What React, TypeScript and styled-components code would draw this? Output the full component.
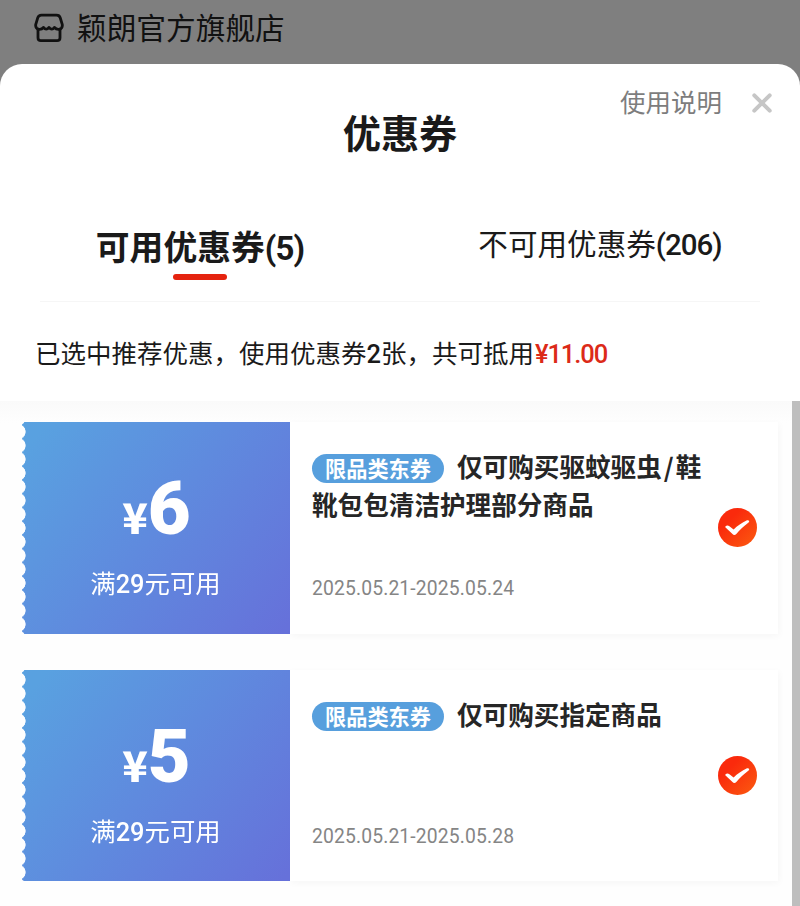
import styled, { createGlobalStyle } from "styled-components";

const GlobalStyle = createGlobalStyle`
  * {
    box-sizing: border-box;
  }
  body {
    margin: 0;
    background-color: #7f7f7f;
    color: #1a1a1a;
    font-family: "Noto Sans CJK SC", sans-serif;
  }
`;
const Page = styled.div`
  display: flex;
  flex-direction: column;
  width: 800px;
  height: 906px;
  overflow: hidden;
  background-color: #7f7f7f;
`;
const ShopBar = styled.header`
  display: flex;
  align-items: center;
  gap: 13px;
  height: 64px;
  padding: 0 0 8px 34px;
  svg {
    width: 30px;
    height: 30px;
  }
`;
const ShopName = styled.span`
  padding-bottom: 3px;
  font-size: 29.7px;
  line-height: 40px;
  color: #111;
`;
const Sheet = styled.section`
  flex: 1;
  display: flex;
  flex-direction: column;
  min-height: 0;
  overflow: hidden;
  background-color: #fff;
  border-radius: 22px 22px 0 0;
`;
const SheetActions = styled.div`
  display: flex;
  justify-content: flex-end;
  align-items: center;
  gap: 29px;
  height: 49px;
  padding: 26px 27px 0 0;
`;
const HelpLink = styled.a`
  padding-bottom: 2px;
  font-size: 25.5px;
  line-height: 25px;
  color: #7d7d7d;
`;
const CloseButton = styled.button`
  display: flex;
  padding: 2px 0 0;
  border: 0;
  background: none;
  svg {
    width: 22px;
    height: 22px;
  }
`;
const Title = styled.h1`
  margin: 0;
  font-size: 38.2px;
  font-weight: 700;
  line-height: 38px;
  text-align: center;
`;
const Tabs = styled.nav`
  display: grid;
  grid-template-columns: 1fr 1fr;
  height: 151px;
  margin: 0 40px;
  padding-top: 72px;
  border-bottom: 1px solid #f6f6f6;
`;
const Tab = styled.div<{ $active?: boolean }>`
  display: flex;
  flex-direction: column;
  align-items: center;
  white-space: nowrap;
  font-size: ${(p) => (p.$active ? "33.8px" : "29.6px")};
  font-weight: ${(p) => (p.$active ? 700 : 400)};
  line-height: ${(p) => (p.$active ? "46px" : "40px")};
  padding-left: ${(p) => (p.$active ? 0 : "40px")};
  padding-right: ${(p) => (p.$active ? "40px" : 0)};
`;
const TabCount = styled.span<{ $active?: boolean }>`
  font-family: Roboto, sans-serif;
  font-size: ${(p) => (p.$active ? "33px" : "29.5px")};
  font-weight: ${(p) => (p.$active ? 700 : 500)};
  line-height: 1;
  letter-spacing: ${(p) => (p.$active ? "-0.9px" : "-1px")};
`;
const TabLine = styled.i`
  width: 54px;
  height: 6px;
  margin-top: 5px;
  border-radius: 3px;
  background-color: #e5230f;
`;
const Summary = styled.p`
  margin: 0;
  height: 99px;
  padding: 31px 0 0 35px;
  font-size: 25.5px;
  line-height: 38px;
  white-space: nowrap;
`;
const Num = styled.span`
  font-family: Roboto, sans-serif;
  font-weight: 500;
  line-height: 1;
`;
const Amount = styled(Num)`
  color: #dc2a18;
  letter-spacing: -1.1px;
  margin-left: 1px;
`;
const ListArea = styled.div`
  flex: 1;
  display: flex;
  min-height: 0;
`;
const List = styled.ul`
  flex: 1;
  display: flex;
  flex-direction: column;
  gap: 36px;
  margin: 0;
  padding: 21px 14px 0 21px;
  list-style: none;
  background: linear-gradient(#fafafa, #fefefe 22px);
`;
const ScrollTrack = styled.div`
  width: 8px;
  background-color: #bebebe;
`;
const Card = styled.li`
  display: flex;
  flex-shrink: 0;
  height: 211.5px;
`;
const Ticket = styled.div`
  display: flex;
  flex-direction: column;
  align-items: center;
  width: 269px;
  padding-top: 45px;
  color: #fff;
  background: linear-gradient(128deg, #59a1e0 6%, #5f8ade 50%, #6671da 98%);
  /* perforated left edge */
  mask:
    radial-gradient(circle at -3px 50%, transparent 7.3px, #000 7.9px) 0 2.9px /
      6px 13.75px repeat-y,
    linear-gradient(#000, #000) 6px 0 / 100% 100% no-repeat;
`;
const Price = styled.div`
  display: flex;
  align-items: baseline;
  height: 84px;
  line-height: 84px;
`;
const Yen = styled.span`
  font-size: 42px;
  font-weight: 900;
  line-height: 1;
`;
const Value = styled.span`
  font-family: Roboto, sans-serif;
  font-size: 74px;
  font-weight: 900;
  line-height: 84px;
  letter-spacing: -2px;
`;
const Condition = styled.div`
  margin-top: 12px;
  font-size: 25.4px;
  line-height: 38px;
`;
const Detail = styled.div`
  flex: 1;
  display: flex;
  align-items: center;
  padding: 0 21px 0 22px;
  background-color: #fff;
  box-shadow: 1px 2px 7px rgba(0, 0, 0, 0.035);
`;
const Info = styled.div`
  width: 406px;
  height: 100%;
  padding-top: 25px;
`;
const Name = styled.div`
  height: 121px;
  font-size: 25.6px;
  font-weight: 700;
  line-height: 38.4px;
  color: #262626;
`;
const NameLine = styled.div`
  display: flex;
  white-space: nowrap;
`;
const NamePart = styled.span<{ $slash?: boolean }>`
  padding: ${(p) => (p.$slash ? "0 2px" : 0)};
`;
const Tag = styled.span`
  width: 132px;
  height: 29px;
  margin: 7px 13px 0 0;
  border-radius: 15px;
  background-color: #579fdd;
  color: #fff;
  font-size: 21.2px;
  line-height: 27px;
  text-align: center;
`;
const DateRange = styled.div`
  font-family: Roboto, sans-serif;
  font-size: 19.3px;
  line-height: 42px;
  letter-spacing: 0.15px;
  color: #858585;
`;
const Check = styled.svg`
  width: 39px;
  height: 39px;
`;

interface ICoupon {
  id: number;
  value: string;
  name: string[][]; // lines, each split into its parts
  date: string;
}

const coupons: ICoupon[] = [
  {
    id: 1,
    value: "6",
    name: [["仅可购买驱蚊驱虫", "/", "鞋"], ["靴包包清洁护理部分商品"]],
    date: "2025.05.21-2025.05.24",
  },
  {
    id: 2,
    value: "5",
    name: [["仅可购买指定商品"]],
    date: "2025.05.21-2025.05.28",
  },
];

function Coupon({ id, value, name, date }: ICoupon) {
  return (
    <Card>
      <Ticket>
        <Price>
          <Yen>¥</Yen>
          <Value>{value}</Value>
        </Price>
        <Condition>
          满<Num>29</Num>元可用
        </Condition>
      </Ticket>
      <Detail>
        <Info>
          <Name>
            {name.map((parts, i) => (
              <NameLine key={i}>
                {i === 0 ? <Tag>限品类东券</Tag> : null}
                {parts.map((part) => (
                  <NamePart key={part} $slash={part === "/"}>
                    {part}
                  </NamePart>
                ))}
              </NameLine>
            ))}
          </Name>
          <DateRange>{date}</DateRange>
        </Info>
        <Check viewBox="0 0 39 39">
          <defs>
            <linearGradient id={`check${id}`} x1="0" y1="0" x2="1" y2="1">
              <stop offset="0.3" stopColor="#fa2a0c" />
              <stop offset="1" stopColor="#fb5c10" />
            </linearGradient>
          </defs>
          <circle cx="19.5" cy="19.5" r="19.5" fill={`url(#check${id})`} />
          <path
            d="M7.6 18.2C8.7 17.3 10.3 17.4 11.4 18.3L15.6 21.4C19.4 18 23.8 14.6 29 12.3C30.8 11.6 32 13.2 30.6 14.5C26 17.8 21.6 22 18.3 26C17.2 27.4 15.5 27.4 14.5 26.1L7.8 19.8C7.3 19.3 7.2 18.6 7.6 18.2Z"
            fill="#fff"
          />
        </Check>
      </Detail>
    </Card>
  );
}

export default function App() {
  return (
    <Page>
      <GlobalStyle />
      <ShopBar>
        <svg
          viewBox="0 0 30 30"
          fill="none"
          stroke="#111"
          strokeWidth="2.8"
          strokeLinejoin="round"
          strokeLinecap="round"
        >
          <path d="M7.5 2.2H22.5Q25.4 2.2 26.2 4.7L28.3 11.7Q28.7 15.5 25.3 16.3Q22.3 16.7 20.5 14.4Q17.8 17.8 15 14.4Q12.2 17.8 9.5 14.4Q7.7 16.7 4.7 16.3Q1.3 15.5 1.7 11.7L3.8 4.7Q4.6 2.2 7.5 2.2Z" />
          <path d="M4 16.2V24.8Q4 27.7 6.9 27.7H23.1Q26 27.7 26 24.8V16.2" />
        </svg>
        <ShopName>颖朗官方旗舰店</ShopName>
      </ShopBar>
      <Sheet>
        <SheetActions>
          <HelpLink>使用说明</HelpLink>
          <CloseButton aria-label="关闭">
            <svg
              viewBox="0 0 22 22"
              stroke="#c6c6c6"
              strokeWidth="4"
              strokeLinecap="round"
            >
              <path d="M3.3 3.3L18.7 18.7M18.7 3.3L3.3 18.7" />
            </svg>
          </CloseButton>
        </SheetActions>
        <Title>优惠券</Title>
        <Tabs>
          <Tab $active>
            <span>
              可用优惠券<TabCount $active>(5)</TabCount>
            </span>
            <TabLine />
          </Tab>
          <Tab>
            <span>
              不可用优惠券<TabCount>(206)</TabCount>
            </span>
          </Tab>
        </Tabs>
        <Summary>
          已选中推荐优惠，使用优惠券<Num>2</Num>张，共可抵用
          <Amount>¥11.00</Amount>
        </Summary>
        <ListArea>
          <List>
            {coupons.map((coupon) => (
              <Coupon key={coupon.id} {...coupon} />
            ))}
          </List>
          <ScrollTrack />
        </ListArea>
      </Sheet>
    </Page>
  );
}
